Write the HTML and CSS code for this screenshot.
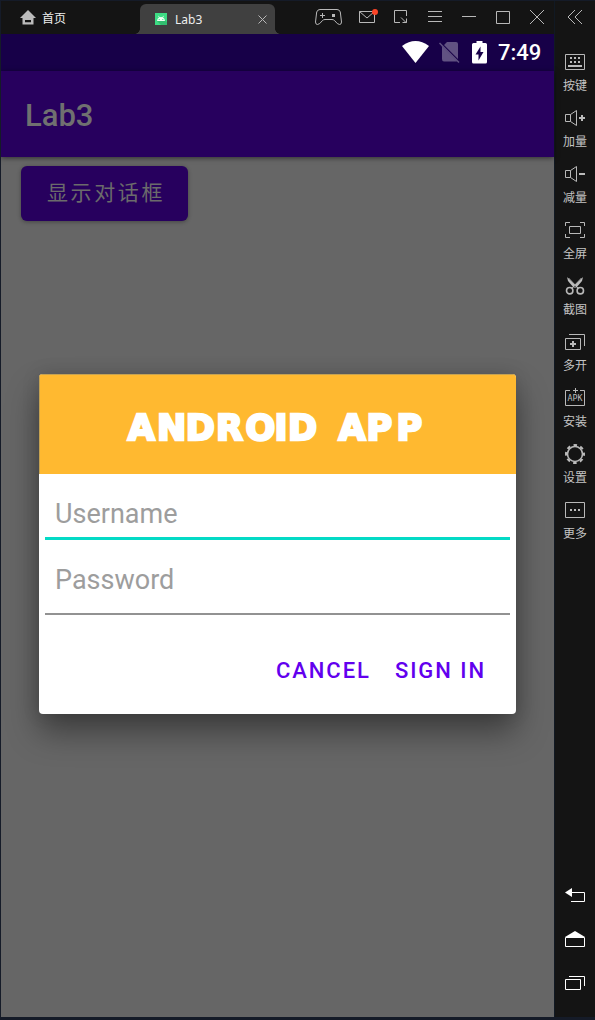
FILE: index.html
```html
<!DOCTYPE html>
<html lang="zh-CN">
<head>
<meta charset="utf-8">
<title>Lab3</title>
<link rel="stylesheet" href="styles.css">
</head>
<body>
<div class="window">
  <main class="main">
    <header class="titlebar">
      <div class="home">
        <svg width="16" height="15"><path fill="#bbb" fill-rule="evenodd" d="M8 0L16 8H13.500V14.500H2.500V8H0ZM5 10V12.200H11V10Z"/></svg>
        <span>首页</span>
      </div>
      <div class="tab">
        <svg class="droid" width="12" height="12"><path fill="#3ddc84" d="M0 0H12V12H0Z"/><path fill="#32bd70" d="M10 7L12 9V12H6L2 8Z"/><path fill="#effff5" d="M2 8Q2.200 5.200 4 4.500L3.200 3L3.700 2.800L4.600 4.200Q6 3.700 7.400 4.200L8.300 2.800L8.800 3L8 4.500Q9.800 5.200 10 8Z"/><path fill="#3ddc84" d="M3.700 6H4.700V7H3.700ZM7.300 6H8.300V7H7.300Z"/></svg>
        <span class="tab-name">Lab3</span>
        <svg width="9" height="9"><path class="line" d="M.5 .5L8.500 8.500M8.500 .5L.5 8.500"/></svg>
      </div>
      <div class="tools">
        <svg width="28" height="18"><path class="line" d="M5 1.500H22Q24.500 1.500 25.300 4L26.500 14Q26.500 16.500 24.500 16.500Q22.500 16.500 19.500 12.500Q18.500 11.500 17 11.500H10Q8.500 11.500 7.500 12.500Q4.500 16.500 2.500 16.500Q.5 16.500 .5 14L1.700 4Q2.500 1.500 5 1.500ZM5 7.500H10M7.500 5V10"/><path fill="#bbb" d="M17 6H20V9H17Z"/></svg>
        <svg width="20" height="18"><path class="line" d="M.5 3.500H15.500V14.500H.5ZM.5 3.500L8 10L15.500 3.500"/><circle cx="16" cy="4" r="3" fill="#fb4528"/></svg>
        <svg width="14" height="18"><path class="line" d="M6 14.500H.5V2.500H12.500V8M7 9.500L12.500 15M12.500 10.500V14.500H8.500"/></svg>
        <svg width="14" height="18"><path class="line" d="M0 3.500H14M0 8.500H14M0 13.500H14"/></svg>
        <svg width="14" height="18"><path class="line" d="M0 8.500H14"/></svg>
        <svg width="14" height="18"><path class="line" d="M.5 3.500H13.500V15.500H.5Z"/></svg>
        <svg width="14" height="18"><path class="line" d="M0 2L14 16M14 2L0 16"/></svg>
      </div>
    </header>
    <section class="screen">
      <div class="status">
        <svg width="28" height="24"><path fill="#fff" d="M0 5Q13.500-5 27 5L13.500 22Z"/></svg>
        <svg width="22" height="24"><path fill="#fff" opacity=".32" d="M8 1H17Q19 1 19 3V18L5 4ZM2.500 5L18 20.500H5Q3 20.500 3 18V5Z"/><path stroke="#fff" opacity=".32" stroke-width="1.400" d="M.5 2L20 21.500"/></svg>
        <svg width="16" height="24"><path fill="#fff" fill-rule="evenodd" d="M4.500 0H10.500V2H13.500Q15 2 15 3.500V21Q15 22.500 13.500 22.500H1.500Q0 22.500 0 21V3.500Q0 2 1.500 2H4.500ZM8.500 5.500L3.500 13.500H6.500V19.500L11.500 11H8.500Z"/></svg>
        <span class="time">7:49</span>
      </div>
      <div class="appbar">Lab3</div>
      <div class="content">
        <div class="show-button">显示对话框</div>
        <div class="dialog">
          <div class="banner">
            <svg width="477" height="99"><text class="logo" y="64.500" x="87.700 117 145.800 176 205.500 234.500 248">ANDROID</text><text class="logo" y="64.500" x="298.500 326.500 356.500">APP</text></svg>
          </div>
          <div class="field field-focus">Username</div>
          <div class="field">Password</div>
          <div class="actions"><span>CANCEL</span><span>SIGN IN</span></div>
        </div>
      </div>
    </section>
  </main>
  <aside class="sidebar">
    <svg class="collapse" width="16" height="16"><path class="line" d="M8 1L1 8L8 15M15 1L8 8L15 15"/></svg>
    <div class="item"><svg width="20" height="20"><path class="line" d="M.5 2.500H19.500V17.500H.5Z"/><path fill="#bbb" d="M5 5h2v2H5zm4 0h2v2H9zm4 0h2v2h-2zM5 9h2v2H5zm4 0h2v2H9zm4 0h2v2h-2zM3 13h14v2H3z"/></svg><span>按键</span></div>
    <div class="item"><svg width="20" height="20"><path class="line" d="M.5 6.500H5.500V13.500H.5ZM5.500 6.500L11.500 2.500V17.500L5.500 13.500"/><path fill="#bbb" d="M14 9h2V7h2v2h2v2h-2v2h-2v-2h-2z"/></svg><span>加量</span></div>
    <div class="item"><svg width="20" height="20"><path class="line" d="M.5 6.500H5.500V13.500H.5ZM5.500 6.500L11.500 2.500V17.500L5.500 13.500"/><path fill="#bbb" d="M14 9h6v2h-6z"/></svg><span>减量</span></div>
    <div class="item"><svg width="20" height="20"><path class="line" d="M4.500 6.500H15.500V13.500H4.500ZM.5 6V2.500H5M15 2.500H19.500V6M19.500 14V17.500H15M5 17.500H.5V14"/></svg><span>全屏</span></div>
    <div class="item"><svg width="20" height="20"><path class="line" d="M6.500 12.500L16.500 2M13.500 12.500L3.500 2" stroke-width="2"/><circle class="line thick" cx="4.700" cy="14.700" r="3.200"/><circle class="line thick" cx="15.300" cy="14.700" r="3.200"/><path fill="#bbb" d="M2 1L11 10L9 12L3 5ZM18 1L9 10L11 12L17 5Z"/></svg><span>截图</span></div>
    <div class="item"><svg width="20" height="20"><path class="line" d="M.5 6.500H15.500V17.500H.5ZM4 2.500H19.500V14"/><path fill="#bbb" d="M7 9h2v2h2v2H9v2H7v-2H5v-2h2z"/></svg><span>多开</span></div>
    <div class="item"><svg width="20" height="20"><path class="line" d="M5 2.500H.5V17.500H19.500V2.500H15M10.500 0V5M8 2.500H13"/><text class="apk" x="2.500" y="13" textLength="15" lengthAdjust="spacingAndGlyphs">APK</text></svg><span>安装</span></div>
    <div class="item"><svg width="20" height="20"><circle class="line thick" cx="10" cy="10" r="7.500"/><circle class="teeth" cx="10" cy="10" r="9"/></svg><span>设置</span></div>
    <div class="item"><svg width="20" height="20"><path class="line" d="M.5 2.500H19.500V17.500H.5Z"/><path fill="#bbb" d="M5 9h2v2H5zm4 0h2v2H9zm4 0h2v2h-2z"/></svg><span>更多</span></div>
    <nav class="nav">
      <svg width="20" height="20"><path class="white" d="M6 7.500H19.500V16.500H6"/><path fill="#fff" d="M0 7.500L7 3V12Z"/></svg>
      <svg width="20" height="20"><path class="white" d="M.5 8.500H19.500V17.500H.5Z"/><path fill="#fff" d="M0 8L10 2L20 8Z"/></svg>
      <svg width="20" height="20"><path class="white" d="M.5 6.500H15.500V16.500H.5ZM4 3.500H19.500V13"/></svg>
    </nav>
  </aside>
</div>
</body>
</html>
```
FILE: styles.css
```css
* { box-sizing: border-box; }
body { margin: 0; background: #141414; font-family: "Liberation Sans", "Noto Sans CJK SC", sans-serif; }
svg { display: block; flex: none; }
.window { width: 595px; height: 1020px; display: flex; overflow: hidden; background: #141414; border: solid #151b28; border-width: 1px 0 3px 1px; }
.main { width: 553px; display: flex; flex-direction: column; }
.line { fill: none; stroke: #b8b8b8; stroke-width: 1; }
.thick { stroke-width: 1.600; }
.white { fill: none; stroke: #fff; }
.teeth { fill: none; stroke: #bbb; stroke-width: 2; stroke-dasharray: 3.600 3.469; stroke-dashoffset: 1.800; }

.titlebar { height: 33px; display: flex; color: #eee; font-size: 12px; }
.home { width: 139px; padding: 0 0 0 19px; display: flex; align-items: center; gap: 6px; font-family: "Noto Sans CJK SC", sans-serif; }
.tab { position: relative; width: 135px; margin-top: 3px; height: 30px; padding: 0 8px 0 15px; display: flex; align-items: center; border-radius: 6px 6px 0 0; background: #404040; }
.tab::before, .tab::after { content: ""; position: absolute; bottom: 0; width: 5px; height: 5px; }
.tab::before { left: -5px; background: radial-gradient(circle at 0 0, transparent 4.500px, #404040 5px); }
.tab::after { right: -5px; background: radial-gradient(circle at 100% 0, transparent 4.500px, #404040 5px); }
.droid { margin-right: 8px; }
.tab-name { flex: 1; font-family: "Noto Sans", sans-serif; }
.tools { display: grid; grid-template-columns: 44px 35px 34px 34px 34px 34px 14px; padding: 7px 0 0 40px; }

.screen { flex: 1; display: flex; flex-direction: column; background: #666; font-family: Roboto, "Noto Sans CJK SC", sans-serif; }
.status { height: 37px; background: #170048; display: flex; align-items: center; justify-content: flex-end; padding-right: 13px; color: #fff; }
.status svg:nth-child(2) { margin: 0 11px 0 9px; }
.status svg:first-child { margin-top: 0; }
.time { width: 43px; margin-left: 10px; font-size: 22px; font-weight: 500; }
.appbar { position: relative; height: 86px; background: #27005e; padding: 2px 0 0 24px; display: flex; align-items: center; color: #707070; font-size: 31px; font-weight: 500; box-shadow: 0 1px 5px #0008; }
.content { padding: 9px 0 0 20px; }
.show-button { width: 167px; height: 55px; border-radius: 6px; background: #27005e; color: #6b6b6b; font-size: 21px; letter-spacing: 2.600px; line-height: 54px; padding-left: 26px; box-shadow: 0 1px 4px #0005; }
.dialog { width: 477px; height: 340px; margin: 153px 0 0 18px; border-radius: 4px; overflow: hidden; background: #fff; box-shadow: 0 18px 32px #0006, 0 0 18px #0002; }
.banner { height: 100px; background: #ffb930; border: solid #c5a252; border-width: 1px 0 0 1px; }
.logo { font: bold 35px "DejaVu Sans", sans-serif; fill: #fff; stroke: #fff; stroke-width: 2.500; stroke-linejoin: miter; }
.field { height: 75px; margin: 0 6px; padding: 15px 10px 0; border-bottom: 2px solid #929292; color: #9d9d9d; font-size: 27px; line-height: 50px; }
.field-focus { height: 66px; border-bottom: 3px solid #04dac6; }
.actions { display: flex; justify-content: flex-end; gap: 24px; padding: 42px 30px 0 0; color: #6200ee; font-size: 22px; line-height: 28px; font-weight: 500; letter-spacing: 1.950px; }

.sidebar { width: 41px; padding-top: 8px; display: flex; flex-direction: column; align-items: center; font-family: "Noto Sans CJK SC", sans-serif; border-left: 1px solid #111923; }
.collapse { margin-bottom: 27px; }
.item { display: flex; flex-direction: column; align-items: center; gap: 5px; height: 56px; color: #c4c4c4; font-size: 12px; line-height: 16px; }
.nav { flex: 1; display: flex; flex-direction: column; justify-content: flex-end; gap: 24px; padding-bottom: 24px; }
.apk { font: 8px "DejaVu Sans Mono", monospace; fill: #bbb; }
```
